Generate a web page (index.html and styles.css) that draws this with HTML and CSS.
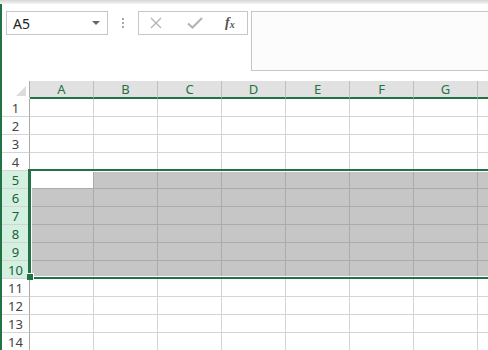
FILE: index.html
```html
<!DOCTYPE html>
<html lang="en">
<head>
  <meta charset="UTF-8" />
  <title>Sheet</title>
  <link rel="stylesheet" href="styles.css">
</head>
<body>
  <div class="ribbon-edge"></div>
  <div class="app">
    <div class="formula-area">
      <div class="name-box">
        <span class="name-text">A5</span>
        <span class="drop-arrow"></span>
      </div>
      <div class="grip"><i></i><i></i><i></i></div>
      <div class="fx-buttons">
        <svg class="btn-icon" width="12" height="12" viewBox="0 0 12 12"><path d="M1 1 L11 11 M11 1 L1 11" stroke="#b4b4b4" stroke-width="1.4" fill="none"/></svg>
        <svg class="btn-icon" width="16" height="12" viewBox="0 0 16 12"><path d="M1 6.5 L5.5 10.5 L15 1" stroke="#b4b4b4" stroke-width="2.2" fill="none"/></svg>
        <span class="fx">f<sub>x</sub></span>
      </div>
      <div class="formula-bar"></div>
    </div>

    <div class="sheet">
      <table class="grid">
        <tr class="col-heads">
          <th class="corner"><span class="corner-tri"></span></th>
          <th>A</th><th>B</th><th>C</th><th>D</th><th>E</th><th>F</th><th>G</th><th></th>
        </tr>
        <tr><th>1</th><td></td><td></td><td></td><td></td><td></td><td></td><td></td><td></td></tr>
        <tr><th>2</th><td></td><td></td><td></td><td></td><td></td><td></td><td></td><td></td></tr>
        <tr><th>3</th><td></td><td></td><td></td><td></td><td></td><td></td><td></td><td></td></tr>
        <tr><th>4</th><td></td><td></td><td></td><td></td><td></td><td></td><td></td><td></td></tr>
        <tr class="sel"><th>5</th><td class="active"></td><td></td><td></td><td></td><td></td><td></td><td></td><td></td></tr>
        <tr class="sel"><th>6</th><td></td><td></td><td></td><td></td><td></td><td></td><td></td><td></td></tr>
        <tr class="sel"><th>7</th><td></td><td></td><td></td><td></td><td></td><td></td><td></td><td></td></tr>
        <tr class="sel"><th>8</th><td></td><td></td><td></td><td></td><td></td><td></td><td></td><td></td></tr>
        <tr class="sel"><th>9</th><td></td><td></td><td></td><td></td><td></td><td></td><td></td><td></td></tr>
        <tr class="sel"><th>10</th><td></td><td></td><td></td><td></td><td></td><td></td><td></td><td></td></tr>
        <tr><th>11</th><td></td><td></td><td></td><td></td><td></td><td></td><td></td><td></td></tr>
        <tr><th>12</th><td></td><td></td><td></td><td></td><td></td><td></td><td></td><td></td></tr>
        <tr><th>13</th><td></td><td></td><td></td><td></td><td></td><td></td><td></td><td></td></tr>
        <tr><th>14</th><td></td><td></td><td></td><td></td><td></td><td></td><td></td><td></td></tr>
      </table>
      <div class="selection"></div>
      <div class="fill-handle"></div>
    </div>
  </div>
</body>
</html>
```

FILE: styles.css
```css
html, body {
  margin: 0;
  padding: 0;
  overflow: hidden;
  background: #fff;
  font-family: "Noto Sans", "Open Sans", sans-serif;
  height: 350px;
}
.ribbon-edge {
  height: 4px;
  background: linear-gradient(#d6d6d6, #f4f4f4);
}
.app {
  border-left: 2px solid #217346;
  height: 346px;
}
.formula-area {
  display: flex;
  align-items: flex-start;
  height: 77px;
  padding: 7px 0 0 4px;
  box-sizing: border-box;
}
.name-box {
  width: 102px;
  height: 24px;
  box-sizing: border-box;
  border: 1px solid #c6c6c6;
  display: flex;
  align-items: center;
  justify-content: space-between;
  padding: 0 7px 0 6px;
}
.name-text {
  font-size: 14px;
  color: #222;
}
.drop-arrow {
  width: 0;
  height: 0;
  border-left: 4px solid transparent;
  border-right: 4px solid transparent;
  border-top: 4px solid #666;
}
.grip {
  width: 30px;
  height: 24px;
  display: flex;
  flex-direction: column;
  align-items: center;
  justify-content: center;
  gap: 2px;
}
.grip i {
  width: 2px;
  height: 2px;
  background: #a8a8a8;
}
.fx-buttons {
  width: 110px;
  height: 24px;
  box-sizing: border-box;
  border: 1px solid #c6c6c6;
  display: flex;
  align-items: center;
  padding: 0 0 0 11px;
  gap: 25px;
}
.fx {
  font-family: "Liberation Serif", serif;
  font-style: italic;
  font-weight: bold;
  font-size: 14px;
  color: #555;
  margin-left: -3px;
}
.fx sub {
  font-size: 10px;
  vertical-align: -1px;
}
.formula-bar {
  flex: 1;
  margin: 0 -5px 0 3px;
  height: 60px;
  box-sizing: border-box;
  border: 1px solid #c6c6c6;
  background: #fcfcfc;
}
.sheet {
  position: relative;
}
.grid {
  border-collapse: separate;
  border-spacing: 0;
  table-layout: fixed;
}
.grid th, .grid td {
  padding: 0;
  box-sizing: border-box;
}
.grid td {
  width: 64px;
  min-width: 64px;
  height: 18px;
  border-right: 1px solid #d4d4d4;
  border-bottom: 1px solid #d4d4d4;
}
.grid tr > th {
  width: 28px;
  min-width: 28px;
  height: 18px;
  font-weight: normal;
  font-size: 13px;
  color: #444;
  text-align: center;
  border-right: 1px solid #ababab;
  border-bottom: 1px solid #d4d4d4;
  line-height: 16px;
}
.grid .col-heads th {
  height: 18px;
  background: #e1e1e1;
  color: #217346;
  border-right: 1px solid #c0c0c0;
  border-bottom: 2px solid #217346;
  width: 64px;
  line-height: 15px;
}
.grid .col-heads th.corner {
  width: 28px;
  background: #fff;
  border-right: 1px solid #ababab;
  border-bottom: 2px solid #fff;
  position: relative;
}
.corner-tri {
  position: absolute;
  right: 3px;
  bottom: 1px;
  width: 0;
  height: 0;
  border-left: 10px solid transparent;
  border-bottom: 10px solid #dcdcdc;
}
.grid tr.sel th {
  background: #d3f0e0;
  color: #1e5e3c;
}
.grid tr.sel td {
  background: #c6c6c6;
  border-color: #ababab;
}
.grid tr.sel td.active {
  background: #fff;
}
.selection {
  position: absolute;
  left: 26px;
  top: 88px;
  right: -10px;
  height: 110px;
  box-sizing: border-box;
  border: 2px solid #217346;
  border-left-width: 3px;
  box-shadow: inset 0 0 0 1px #fff;
}
.fill-handle {
  position: absolute;
  left: 25px;
  top: 192px;
  width: 6px;
  height: 6px;
  background: #217346;
  border: 1px solid #fff;
  border-left: none;
  border-bottom: none;
}
```
